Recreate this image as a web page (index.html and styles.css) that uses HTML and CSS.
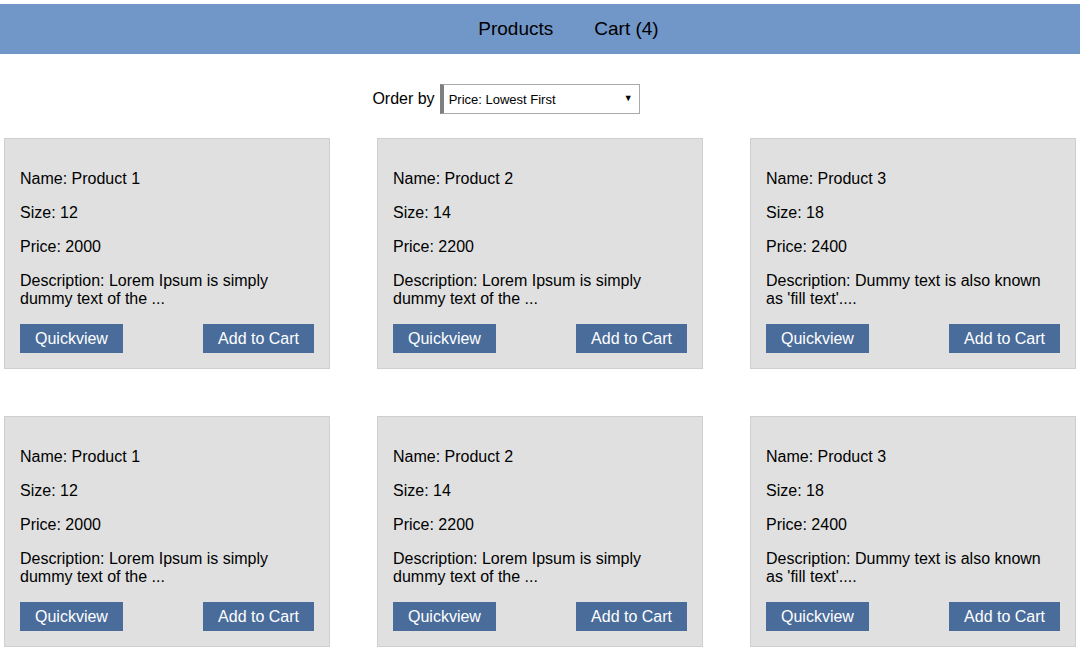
FILE: index.html
```html
<!DOCTYPE html>
<html lang="en">
<head>
<meta charset="utf-8">
<title>Products</title>
<link rel="stylesheet" href="styles.css">
</head>
<body>
<header class="topbar">
  <nav class="nav">
    <a class="nav-link" href="#">Products</a>
    <a class="nav-link" href="#">Cart (4)</a>
  </nav>
</header>

<div class="order-row">
  <label class="order-label" for="order">Order by</label>
  <span class="select-wrap">
    <select id="order" class="order-select">
      <option>Price: Lowest First</option>
      <option>Price: Highest First</option>
    </select>
    <span class="select-arrow">&#9660;</span>
  </span>
</div>

<main class="grid">
  <div class="card">
    <p>Name: Product 1</p>
    <p>Size: 12</p>
    <p>Price: 2000</p>
    <p>Description: Lorem Ipsum is simply dummy text of the ...</p>
    <div class="actions"><button class="btn">Quickview</button><button class="btn">Add to Cart</button></div>
  </div>
  <div class="card">
    <p>Name: Product 2</p>
    <p>Size: 14</p>
    <p>Price: 2200</p>
    <p>Description: Lorem Ipsum is simply dummy text of the ...</p>
    <div class="actions"><button class="btn">Quickview</button><button class="btn">Add to Cart</button></div>
  </div>
  <div class="card">
    <p>Name: Product 3</p>
    <p>Size: 18</p>
    <p>Price: 2400</p>
    <p>Description: Dummy text is also known as 'fill text'....</p>
    <div class="actions"><button class="btn">Quickview</button><button class="btn">Add to Cart</button></div>
  </div>
  <div class="card">
    <p>Name: Product 1</p>
    <p>Size: 12</p>
    <p>Price: 2000</p>
    <p>Description: Lorem Ipsum is simply dummy text of the ...</p>
    <div class="actions"><button class="btn">Quickview</button><button class="btn">Add to Cart</button></div>
  </div>
  <div class="card">
    <p>Name: Product 2</p>
    <p>Size: 14</p>
    <p>Price: 2200</p>
    <p>Description: Lorem Ipsum is simply dummy text of the ...</p>
    <div class="actions"><button class="btn">Quickview</button><button class="btn">Add to Cart</button></div>
  </div>
  <div class="card">
    <p>Name: Product 3</p>
    <p>Size: 18</p>
    <p>Price: 2400</p>
    <p>Description: Dummy text is also known as 'fill text'....</p>
    <div class="actions"><button class="btn">Quickview</button><button class="btn">Add to Cart</button></div>
  </div>
</main>
</body>
</html>
```

FILE: styles.css
```css
html, body {
  margin: 0;
  padding: 0;
  background: #ffffff;
}
body {
  padding-top: 4px;
  font-family: "Liberation Sans", Arial, sans-serif;
  font-size: 16px;
  color: #000;
}
.topbar {
  height: 50px;
  background: #7196c8;
  display: flex;
  align-items: center;
  justify-content: center;
}
.nav {
  display: flex;
  gap: 41px;
  padding-left: 57px;
}
.nav-link {
  color: #000;
  text-decoration: none;
  font-size: 19px;
}
.order-row {
  display: flex;
  align-items: center;
  justify-content: center;
  padding-right: 68px;
  margin-top: 30px;
  gap: 5px;
}
.order-label {
  font-size: 16px;
}
.select-wrap {
  position: relative;
  display: inline-block;
}
.order-select {
  -webkit-appearance: none;
  appearance: none;
  width: 200px;
  height: 30px;
  margin: 0;
  padding: 0 0 0 5px;
  border: 1px solid #a9a9a9;
  border-left: 4px solid #7f7f7f;
  background: #fff;
  border-radius: 0;
  font-family: "Liberation Sans", Arial, sans-serif;
  font-size: 13px;
  color: #000;
  outline: none;
}
.select-arrow {
  position: absolute;
  right: 7px;
  top: 9px;
  font-size: 9px;
  color: #000;
  pointer-events: none;
}
.grid {
  display: flex;
  flex-wrap: wrap;
  justify-content: space-between;
  row-gap: 47px;
  padding: 0 4px;
  margin-top: 24px;
}
.card {
  width: 294px;
  padding: 15px;
  background: #e0e0e0;
  border: 1px solid #cfcfcf;
}
.card p {
  margin: 16px 0;
  line-height: 18px;
}
.actions {
  display: flex;
  justify-content: space-between;
  margin-top: 16px;
}
.btn {
  background: #496c9b;
  color: #fff;
  border: none;
  border-radius: 0;
  padding: 5px 15px;
  font-family: "Liberation Sans", Arial, sans-serif;
  font-size: 16px;
  line-height: 19px;
  cursor: pointer;
}
```
